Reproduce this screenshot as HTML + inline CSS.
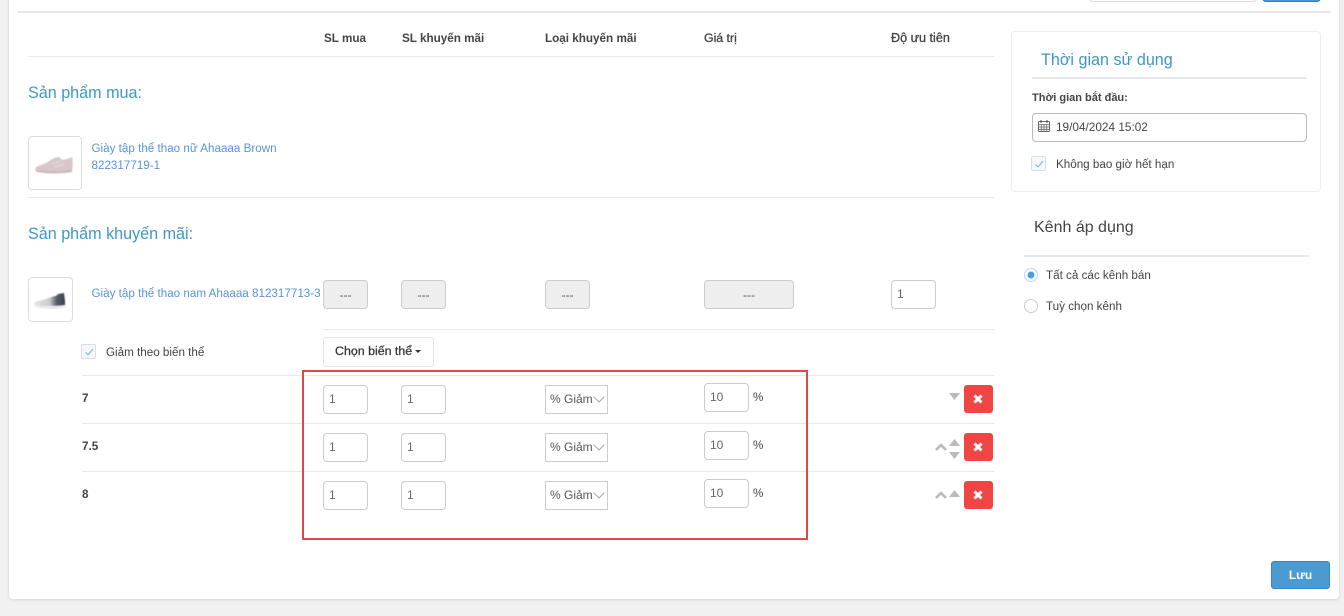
<!DOCTYPE html>
<html lang="vi"><head><meta charset="utf-8"><title>Khuyến mãi</title>
<style>
*{box-sizing:border-box}
html,body{margin:0;padding:0}
body{width:1344px;height:616px;background:#f1f1f1;position:relative;overflow:hidden;font-family:"Liberation Sans",sans-serif;font-size:11.65px;color:#444}
.a{position:absolute;white-space:nowrap}
.card{position:absolute;left:9px;top:-6px;width:1330px;height:605px;background:#fff;border-radius:4px;box-shadow:0 1px 3px rgba(0,0,0,.12)}
.hl{position:absolute;height:1px;background:#e9e9e9}
.th{position:absolute;top:31px;font-weight:bold;font-size:11.7px;line-height:15px;color:#444;white-space:nowrap}
.h{position:absolute;font-size:16.15px;line-height:20px;color:#3f97c7;white-space:nowrap}
.lnk{position:absolute;color:#5a93d8;font-size:11.65px;line-height:17px;white-space:nowrap}
.in{position:absolute;width:45px;height:29px;border:1px solid #ccc;border-radius:4px;background:#fff;font-size:12px;line-height:27px;padding-left:5px;color:#666}
.dis{position:absolute;height:29px;border:1px solid #ccc;border-radius:4px;background:#eee;font-size:12px;line-height:28px;text-align:center;color:#555}
.sel{position:absolute;left:545px;width:63px;height:29px;border:1px solid #ccc;background:#fff;font-size:12px;line-height:27px;padding-left:4px;color:#555}
.sel svg{position:absolute;left:47px;top:10px}
.del{position:absolute;left:964px;width:29px;height:28px;background:#f04545;border-radius:3px}
.del svg{position:absolute;left:9px;top:9px}
.cb{position:absolute;width:15px;height:15px;border:1px solid #cfe0ec;border-radius:2px;background:#f7f7f7}
.cb svg{position:absolute;left:2px;top:2px}
.img{position:absolute;background:#fff;border:1px solid #ddd;border-radius:4px}
.ar{position:absolute}
</style></head><body>
<div class="card"></div>

<div class="a" style="left:1089px;top:-10px;width:168px;height:12px;background:#fff;border:1px solid #ddd;border-radius:4px"></div>
<div class="a" style="left:1262px;top:-10px;width:59px;height:12px;background:#4a9ad0;border:1px solid #2f7fb5;border-radius:4px"></div>
<div class="hl" style="left:18px;top:11px;width:1313px;height:2px;background:#e8e8e8"></div>

<div class="th" style="left:324px">SL mua</div>
<div class="th" style="left:402px">SL khuyến mãi</div>
<div class="th" style="left:545px">Loại khuyến mãi</div>
<div class="th" style="left:704px;font-size:12.3px;font-weight:normal;-webkit-text-stroke:.3px #444">Giá trị</div>
<div class="th" style="left:891px;font-size:12.6px;font-weight:normal;-webkit-text-stroke:.3px #444">Độ ưu tiên</div>
<div class="hl" style="left:28px;top:56px;width:966px"></div>

<div class="h" style="left:28px;top:83px">Sản phẩm mua:</div>
<div class="img" style="left:28px;top:136px;width:54px;height:54px">
<svg width="52" height="52" viewBox="0 0 52 52"><g style="filter:blur(.5px)"><path d="M7 30C12 28 18 26 22 23C25 21 28 20 30 20L33 23L38 22L43 20C44 25 44 30 43 33L43 35C32 36 18 36 8 35C6 34 6 32 7 30Z" fill="#d8c6c9"/><path d="M7 33C18 35 32 35 43 32L43 35C32 37 18 37 8 35Z" fill="#cdb9bc"/><path d="M22 27l9-3M25 30l10-3" stroke="#e8dadc" stroke-width="1.200" fill="none"/></g></svg>
</div>
<div class="lnk" style="left:91.500px;top:140px">Giày tập thể thao nữ Ahaaaa Brown</div>
<div class="lnk" style="left:91.500px;top:157px">822317719-1</div>
<div class="hl" style="left:28px;top:197px;width:966px"></div>

<div class="h" style="left:28px;top:224px">Sản phẩm khuyến mãi:</div>
<div class="img" style="left:28px;top:277px;width:45px;height:45px">
<svg width="43" height="43" viewBox="0 0 43 43"><defs><linearGradient id="s2" x1="0" x2="1" y1="0" y2="0"><stop offset="0" stop-color="#e2e3e7"/><stop offset=".5" stop-color="#c9cbd1"/><stop offset=".72" stop-color="#5a5e6c"/><stop offset="1" stop-color="#3c4050"/></linearGradient></defs><g style="filter:blur(.4px)"><path d="M6 24C10 23 15 22 19 20C22 19 25 18 27 18L29 16L35 15L36 23L36 27C28 28 16 28 8 28C6 27 5 26 6 24Z" fill="url(#s2)"/><path d="M6 27C15 29 28 29 36 27L36 29C28 31 15 31 8 29Z" fill="#ededf0" stroke="#d5d5d8" stroke-width=".4"/></g></svg>
</div>
<div class="lnk" style="left:91.500px;top:285px">Giày tập thể thao nam Ahaaaa 812317713-3</div>
<div class="dis" style="left:323px;top:280px;width:45px">---</div>
<div class="dis" style="left:401px;top:280px;width:45px">---</div>
<div class="dis" style="left:545px;top:280px;width:45px">---</div>
<div class="dis" style="left:704px;top:280px;width:90px">---</div>
<div class="in" style="left:891px;top:280px">1</div>
<div class="hl" style="left:323px;top:329px;width:671px"></div>

<div class="cb" style="left:81px;top:344px"><svg width="10" height="10" viewBox="0 0 10 10"><path d="M1.500 5.500L4 8l5-6" stroke="#6fb7e0" stroke-width="1" fill="none"/></svg></div>
<div class="a" style="left:106px;top:345px;line-height:15px;color:#444">Giảm theo biến thể</div>
<div class="a" style="left:323px;top:337px;width:111px;height:30px;border:1px solid #e3e3e3;border-radius:3px;line-height:27px;padding-left:11px;color:#333;font-size:12.4px;-webkit-text-stroke:.25px #333">Chọn biến thể<span style="display:inline-block;margin-left:3px;vertical-align:middle;border-top:3px solid #333;border-left:3px solid transparent;border-right:3px solid transparent"></span></div>
<div class="hl" style="left:82px;top:375px;width:912px"></div>

<div class="a" style="left:82px;top:391px;font-weight:bold;line-height:15px">7</div>
<div class="in" style="left:323px;top:385px">1</div>
<div class="in" style="left:401px;top:385px">1</div>
<div class="sel" style="top:385px">% Giảm<svg width="12" height="7" viewBox="0 0 12 7"><path d="M.5 .5L6 6l5.500-5.500" stroke="#aaa" fill="none"/></svg></div>
<div class="in" style="left:704px;top:383px">10</div>
<div class="a" style="left:753px;top:390px;line-height:15px">%</div>
<svg class="ar" style="left:949px;top:393px" width="11" height="7"><path d="M0 0h11L5.500 7z" fill="#bbb"/></svg>
<div class="del" style="top:385px"><svg width="10" height="10" viewBox="0 0 10 10"><path d="M1.500 1.500l7 7M8.500 1.500l-7 7" stroke="#fff" stroke-width="3"/></svg></div>
<div class="hl" style="left:82px;top:423px;width:912px"></div>

<div class="a" style="left:82px;top:439px;font-weight:bold;line-height:15px">7.5</div>
<div class="in" style="left:323px;top:433px">1</div>
<div class="in" style="left:401px;top:433px">1</div>
<div class="sel" style="top:433px">% Giảm<svg width="12" height="7" viewBox="0 0 12 7"><path d="M.5 .5L6 6l5.500-5.500" stroke="#aaa" fill="none"/></svg></div>
<div class="in" style="left:704px;top:431px">10</div>
<div class="a" style="left:753px;top:438px;line-height:15px">%</div>
<svg class="ar" style="left:935px;top:443px" width="12" height="8"><path d="M1 7l5-5 5 5" stroke="#bbb" stroke-width="2.600" fill="none"/></svg>
<svg class="ar" style="left:949px;top:439px" width="11" height="7"><path d="M0 7h11L5.500 0z" fill="#bbb"/></svg>
<svg class="ar" style="left:949px;top:452px" width="11" height="7"><path d="M0 0h11L5.500 7z" fill="#bbb"/></svg>
<div class="del" style="top:433px"><svg width="10" height="10" viewBox="0 0 10 10"><path d="M1.500 1.500l7 7M8.500 1.500l-7 7" stroke="#fff" stroke-width="3"/></svg></div>
<div class="hl" style="left:82px;top:471px;width:912px"></div>

<div class="a" style="left:82px;top:487px;font-weight:bold;line-height:15px">8</div>
<div class="in" style="left:323px;top:481px">1</div>
<div class="in" style="left:401px;top:481px">1</div>
<div class="sel" style="top:481px">% Giảm<svg width="12" height="7" viewBox="0 0 12 7"><path d="M.5 .5L6 6l5.500-5.500" stroke="#aaa" fill="none"/></svg></div>
<div class="in" style="left:704px;top:479px">10</div>
<div class="a" style="left:753px;top:486px;line-height:15px">%</div>
<svg class="ar" style="left:935px;top:491px" width="12" height="8"><path d="M1 7l5-5 5 5" stroke="#bbb" stroke-width="2.600" fill="none"/></svg>
<svg class="ar" style="left:949px;top:490px" width="11" height="7"><path d="M0 7h11L5.500 0z" fill="#bbb"/></svg>
<div class="del" style="top:481px"><svg width="10" height="10" viewBox="0 0 10 10"><path d="M1.500 1.500l7 7M8.500 1.500l-7 7" stroke="#fff" stroke-width="3"/></svg></div>

<div class="a" style="left:302px;top:370px;width:506px;height:170px;border:2px solid #e04848"></div>

<div class="a" style="left:1011px;top:31px;width:310px;height:161px;border:1px solid #eee;border-radius:4px"></div>
<div class="h" style="left:1041px;top:50px">Thời gian sử dụng</div>
<div class="hl" style="left:1032px;top:77px;width:275px;height:2px;background:#e8e8e8"></div>
<div class="a" style="left:1032px;top:91px;font-weight:bold;font-size:11px;line-height:15px;color:#444">Thời gian bắt đầu:</div>
<div class="a" style="left:1032px;top:113px;width:275px;height:29px;border:1px solid #bbb;border-radius:4px"></div>
<svg class="ar" style="left:1038px;top:120px" width="12" height="12" viewBox="0 0 12 12"><rect x=".5" y="1.500" width="11" height="10" rx="1" fill="none" stroke="#666"/><path d="M.5 4.500h11M.5 7h11M.5 9.300h11M3.300 4.500v7M6 4.500v7M8.700 4.500v7" stroke="#666" stroke-width=".8"/><path d="M3 0v3M9 0v3" stroke="#666" stroke-width="1.300"/></svg>
<div class="a" style="left:1056px;top:120px;line-height:15px;color:#444;font-size:11.8px">19/04/2024 15:02</div>
<div class="cb" style="left:1031px;top:156px"><svg width="10" height="10" viewBox="0 0 10 10"><path d="M1.500 5.500L4 8l5-6" stroke="#6fb7e0" stroke-width="1" fill="none"/></svg></div>
<div class="a" style="left:1056px;top:157px;line-height:15px;color:#444">Không bao giờ hết hạn</div>

<div class="a" style="left:1034px;top:218px;font-size:16px;line-height:20px;color:#444">Kênh áp dụng</div>
<div class="hl" style="left:1024px;top:255px;width:285px;height:2px;background:#e8e8e8"></div>
<div class="a" style="left:1024px;top:268px;width:14px;height:14px;border:1px solid #b9d9f0;border-radius:50%;background:#fff"><div style="position:absolute;left:3px;top:3px;width:6px;height:6px;border-radius:50%;background:#4f9fe8;box-shadow:0 0 0 .5px #4f9fe8"></div></div>
<div class="a" style="left:1046px;top:268px;line-height:15px;color:#444">Tất cả các kênh bán</div>
<div class="a" style="left:1024px;top:299px;width:14px;height:14px;border:1px solid #ccc;border-radius:50%;background:#fff"></div>
<div class="a" style="left:1046px;top:299px;line-height:15px;color:#444">Tuỳ chọn kênh</div>

<div class="a" style="left:1271px;top:561px;width:59px;height:28px;background:#4b9ad1;border:1px solid #3a85bb;border-radius:3px;color:#fff;text-align:center;line-height:26px;font-weight:bold;font-size:12px">Lưu</div>
</body></html>
